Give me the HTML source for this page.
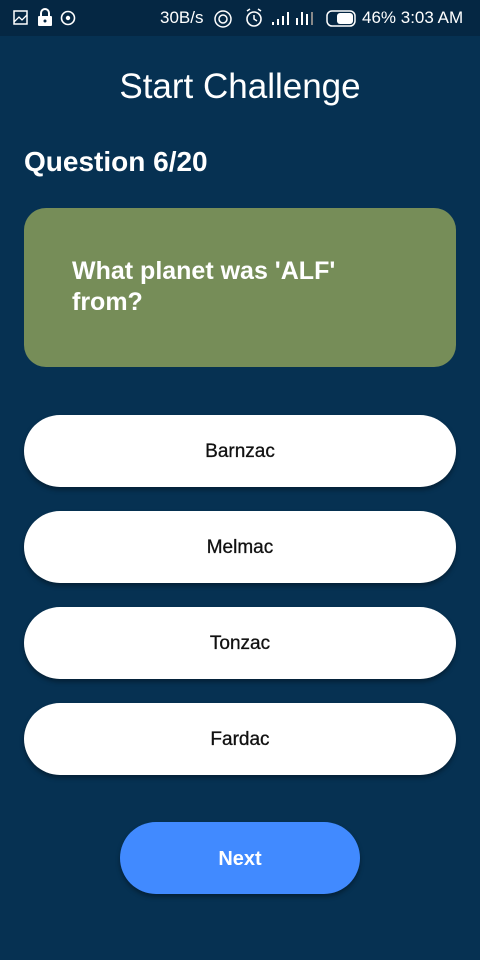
<!DOCTYPE html>
<html><head><style>
body{margin:0;width:480px;height:960px;background:#063152;font-family:"Liberation Sans",Roboto,sans-serif;position:relative;overflow:hidden}
.sb{position:absolute;top:0;left:0;width:480px;height:36px;background:#052743;color:#fff;font-size:17px}
.t{position:absolute;color:#fff}
.opt{position:absolute;left:24px;width:432px;height:72px;background:#fff;border-radius:36px;box-shadow:0 3px 5px rgba(0,0,0,.35);text-align:center;line-height:74px;font-size:19px;color:#111;-webkit-text-stroke:0.3px #111}
</style></head><body>
<div class="sb">
<svg width="480" height="36" style="position:absolute;left:0;top:0">
<rect x="14" y="11" width="13" height="13" fill="none" stroke="#fff" stroke-width="1.5"/>
<path d="M14 22 L19 17 L22 20 L27 15" fill="none" stroke="#fff" stroke-width="1.3"/>
<rect x="38" y="16" width="14" height="10" rx="1" fill="#fff"/>
<path d="M41 16 V13 a4 4 0 0 1 8 0 V16" fill="none" stroke="#fff" stroke-width="2"/>
<circle cx="45" cy="21" r="1.5" fill="#052743"/>
<circle cx="68" cy="18" r="6.5" fill="none" stroke="#fff" stroke-width="1.6"/>
<circle cx="68" cy="18" r="2.2" fill="#fff"/>
<circle cx="223" cy="19" r="8" fill="none" stroke="#fff" stroke-width="1.5"/>
<circle cx="223" cy="19" r="4" fill="none" stroke="#fff" stroke-width="1.5"/>
<circle cx="254" cy="19" r="7" fill="none" stroke="#fff" stroke-width="1.6"/>
<path d="M254 15 V19 L257 21 M247 11 L250 9 M261 11 L258 9" stroke="#fff" stroke-width="1.5" fill="none"/>
<rect x="272" y="22" width="2" height="3" fill="#fff"/><rect x="277" y="19" width="2" height="6" fill="#fff"/><rect x="282" y="16" width="2" height="9" fill="#fff"/><rect x="287" y="12" width="2" height="13" fill="#fff"/>
<rect x="296" y="18" width="2" height="7" fill="#fff"/><rect x="301" y="12" width="2" height="13" fill="#fff"/><rect x="306" y="14" width="2" height="11" fill="#fff"/><rect x="311" y="12" width="2" height="13" fill="#888"/>
<rect x="327" y="11" width="28" height="15" rx="5" fill="none" stroke="#fff" stroke-width="1.5"/>
<rect x="337" y="13" width="16" height="11" rx="3" fill="#fff"/>
</svg>
<span style="position:absolute;left:160px;top:8px">30B/s</span>
<span style="position:absolute;left:362px;top:8px">46% 3:03 AM</span>
</div>
<div class="t" style="left:0;width:480px;text-align:center;top:67px;font-size:35px">Start Challenge</div>
<div class="t" style="left:24px;top:146px;font-size:28px;font-weight:bold">Question 6/20</div>
<div style="position:absolute;left:24px;top:208px;width:432px;height:159px;background:#768d58;border-radius:22px"></div>
<div class="t" style="left:72px;top:256px;font-size:25px;font-weight:bold;line-height:31px;width:300px">What planet was 'ALF' from?</div>
<div class="opt" style="top:415px">Barnzac</div>
<div class="opt" style="top:511px">Melmac</div>
<div class="opt" style="top:607px">Tonzac</div>
<div class="opt" style="top:703px">Fardac</div>
<div style="position:absolute;left:120px;top:822px;width:240px;height:72px;border-radius:36px;background:#418aff;box-shadow:0 3px 5px rgba(0,0,0,.35);color:#fff;font-weight:bold;font-size:20px;text-align:center;line-height:74px">Next</div>
</body></html>
